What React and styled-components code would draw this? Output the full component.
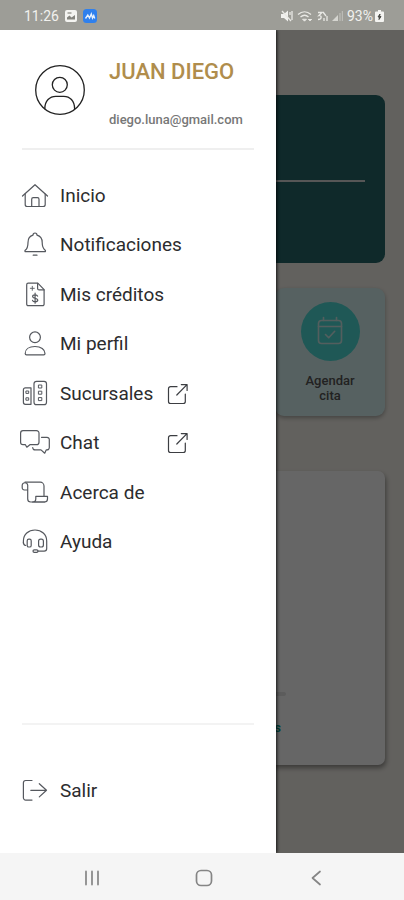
import React from "react";
import styled, { createGlobalStyle } from "styled-components";

const GlobalStyle = createGlobalStyle`
  * {
    box-sizing: border-box;
  }
  body {
    margin: 0;
    font-family: Roboto, "Liberation Sans", sans-serif;
    background: #f5f2eb;
  }
`;

const Screen = styled.div`
  min-height: 100vh;
  display: flex;
  flex-direction: column;
`;

/* status bar */
const StatusBar = styled.header`
  height: 30px;
  padding: 2px 20px 0 24px;
  display: flex;
  align-items: center;
  justify-content: space-between;
  background: #9d9d97;
  color: #f1f1ee;
  font-size: 14px;
`;
const StatusGroup = styled.div`
  display: flex;
  align-items: center;
  gap: ${(props) => props.$gap}px;
`;
const Battery = styled.div`
  display: flex;
  align-items: center;
  gap: 2px;
`;

/* page behind the drawer */
const Main = styled.main`
  flex: 1;
  position: relative;
  display: flex;
  flex-direction: column;
  overflow: hidden;
`;
const Page = styled.div`
  flex: 1;
  padding: 65px 19px 88px;
  display: flex;
  flex-direction: column;
  background: #f5f2eb;
`;
const Hero = styled.section`
  height: 168px;
  padding: 0 20px;
  display: flex;
  align-items: center;
  border-radius: 9px;
  background: #266769;
`;
const HeroLine = styled.hr`
  flex: 1;
  margin: 4px 0 0;
  border: 0;
  border-top: 2px solid #d8d8d8;
`;
const Tile = styled.button`
  align-self: flex-end;
  width: 110px;
  height: 128px;
  margin-top: 25px;
  padding: 0 24px;
  display: flex;
  flex-direction: column;
  align-items: center;
  justify-content: center;
  gap: 12px;
  border: 0;
  border-radius: 9px;
  background: #d8f3f3;
  box-shadow: 0 2px 4px rgba(0, 0, 0, 0.3);
  color: #555;
  font-family: inherit;
  font-size: 13px;
  font-weight: 500;
  line-height: 15px;
`;
const TileCircle = styled.span`
  width: 59px;
  height: 59px;
  display: flex;
  align-items: center;
  justify-content: center;
  flex-shrink: 0;
  border-radius: 50%;
  background: #4fdcd6;
`;
const Panel = styled.section`
  flex: 1;
  min-height: 294px;
  margin-top: 55px;
  padding: 0 104px 29px 0;
  display: flex;
  flex-direction: column;
  justify-content: flex-end;
  align-items: flex-end;
  gap: 24px;
  border-radius: 7px;
  background: #fff;
  box-shadow: 1px 3px 5px rgba(0, 0, 0, 0.4);
`;
const PanelBar = styled.span`
  width: 80px;
  height: 4px;
  margin-right: -5px;
  border-radius: 2px;
  background: #e6e6e6;
`;
const PanelLink = styled.a`
  color: #00a08c;
  font-size: 13px;
  font-weight: 700;
  line-height: 16px;
  text-decoration: none;
`;
const Backdrop = styled.div`
  position: absolute;
  inset: 0;
  background: rgba(0, 0, 0, 0.6);
`;

/* drawer */
const Drawer = styled.aside`
  position: absolute;
  top: 0;
  bottom: 0;
  left: 0;
  width: 276px;
  max-width: 80%;
  padding: 0 22px;
  display: flex;
  flex-direction: column;
  background: #fff;
  box-shadow: 1px 0 3px rgba(0, 0, 0, 0.8);
`;
const Profile = styled.div`
  height: 120px;
  padding: 2px 0 0 12px;
  display: flex;
  align-items: center;
  gap: 23px;
  border-bottom: 2px solid #efefef;
`;
const ProfileText = styled.div`
  padding-top: 8px;
  display: flex;
  flex-direction: column;
  gap: 28px;
`;
const Name = styled.h1`
  margin: 0;
  color: #b08d4c;
  font-size: 22px;
  font-weight: 500;
  line-height: 24px;
`;
const Email = styled.span`
  color: #777;
  font-size: 13px;
  font-weight: 500;
  line-height: 16px;
`;
const Menu = styled.nav`
  height: 396px;
  margin-top: 21px;
  display: grid;
  grid-auto-rows: 1fr;
`;
const MenuItem = styled.a`
  margin-left: -2px;
  display: flex;
  align-items: center;
  gap: 10px;
  color: #2c2c2e;
  font-size: 19px;
  line-height: 24px;
  text-decoration: none;
`;
const MenuLabel = styled.span`
  min-width: ${(props) => (props.$wide ? "97px" : "0")};
`;
const Footer = styled.div`
  margin-top: auto;
  height: 130px;
  padding-top: 3px;
  display: grid;
  border-top: 2px solid #f3f3f3;
`;

/* android navigation */
const SystemNav = styled.footer`
  height: 47px;
  padding: 0 32px 0 36px;
  display: grid;
  grid-template-columns: repeat(3, 1fr);
  background: #f5f5f5;
`;
const SystemButton = styled.button`
  padding: 2px 0 0;
  display: flex;
  align-items: center;
  justify-content: center;
  border: 0;
  background: none;
`;

const Svg = styled.svg`
  flex-shrink: 0;
  fill: none;
  stroke: ${(props) => props.$color || "#55585e"};
  stroke-width: ${(props) => props.$weight || 1.2};
  stroke-linecap: round;
  stroke-linejoin: round;
`;

const icons = {
  home: (
    <>
      <path d="M2.5 15 15 3.7 27.5 15" />
      <path d="M5.2 13v10.5a2 2 0 0 0 2 2h16a2 2 0 0 0 2-2V13" />
      <path d="M11.7 25.5v-7.3a1.5 1.5 0 0 1 1.5-1.5h4.3a1.5 1.5 0 0 1 1.5 1.5v7.3" />
    </>
  ),
  bell: (
    <>
      <path d="M13 5.2c0-1.3.8-2.2 2-2.2s2 .9 2 2.2c3.3.9 5.2 3.6 5.2 7.3 0 4.5 1 6.3 3 7.8.6.5.3 1.4-.5 1.4H5.7c-.8 0-1.1-.9-.5-1.4 2-1.5 2.8-3.3 2.8-7.8 0-3.7 1.7-6.4 5-7.3z" />
      <path d="M13.2 25.2h3.8" />
    </>
  ),
  credit: (
    <>
      <path d="M8.2 3.2h9.6l6.3 6.5v14.5a1.5 1.5 0 0 1-1.5 1.5H8.2a1.5 1.5 0 0 1-1.5-1.5V4.7a1.5 1.5 0 0 1 1.5-1.5z" />
      <path d="M17.6 3.4v5a1.5 1.5 0 0 0 1.5 1.5H24" />
      <path d="M10.3 8.3h4M12.3 6.3v4" strokeWidth="0.9" />
      <path d="M17.6 16.2c-.3-1-1.3-1.4-2.5-1.4-1.5 0-2.5.7-2.5 1.7 0 2.4 5.2 1.2 5.2 3.6 0 1-1.1 1.7-2.6 1.7-1.4 0-2.4-.5-2.7-1.5M15.1 13.2v10" />
    </>
  ),
  user: (
    <>
      <circle cx="15" cy="8.3" r="5.4" />
      <path d="M5.2 24.5c0-4.2 3.8-7 9.8-7s10 2.8 10 7c0 .9-.5 1.3-1.3 1.3H6.500c-.8 0-1.3-.4-1.3-1.3z" />
    </>
  ),
  branches: (
    <>
      <path d="M11 8.8H5.4a2 2 0 0 0-2 2v12.5a2 2 0 0 0 2 2H11z" />
      <rect x="14" y="2.3" width="12.5" height="23.4" rx="2.5" />
      <g strokeWidth="1">
        <rect x="6.3" y="12" width="2.4" height="2.4" />
        <rect x="6.3" y="18.8" width="2.4" height="2.4" />
        <rect x="18.8" y="6" width="3" height="3" />
        <rect x="18.8" y="12.2" width="3" height="3" />
        <rect x="18.8" y="18.6" width="3" height="3" />
      </g>
    </>
  ),
  chat: (
    <>
      <path d="M3 2.7h13.5a2.5 2.5 0 0 1 2.5 2.5v9a2.5 2.5 0 0 1-2.5 2.5h-6.600l-3.1 2.5-1.4-2.5H3A2.5 2.5 0 0 1 .6 14.2v-9A2.5 2.5 0 0 1 3 2.7z" />
      <path d="M21.5 9.3H27a2.3 2.3 0 0 1 2.3 2.3v8a2.3 2.3 0 0 1-2.3 2.3h-.8L24.7 25.2 21 21.9h-6a2.3 2.3 0 0 1-2.3-2.3" />
    </>
  ),
  scroll: (
    <>
      <path d="M7.7 12H4.5A2.2 2.2 0 0 1 2.2 9.8V7a2.8 2.8 0 0 1 5.5 0v14a3 3 0 0 0 3 3h14" />
      <path d="M5 4.2h15.2A3.8 3.8 0 0 1 24 8v9.7" />
      <path d="M15.8 18.3h11.7v2.7a3 3 0 0 1-3 3H12.5a3.3 3.3 0 0 0 3.3-3.3z" />
    </>
  ),
  help: (
    <>
      <path d="M3.4 16v-2C3.4 7.5 8.5 3 15 3s11.7 4.5 11.7 11v7.5a2.6 2.6 0 0 1-2.6 2.6H18" />
      <path d="M3.4 15.5c0 1.7.9 2.7 2.3 3" />
      <rect x="7.2" y="12.2" width="4" height="7.8" rx="1.6" />
      <rect x="18.6" y="12.2" width="4.8" height="7.8" rx="2" />
      <rect x="13" y="22.8" width="5" height="2.6" rx="1.3" />
    </>
  ),
  logout: (
    <>
      <path d="M12 4.5H5.7a2.3 2.3 0 0 0-2.3 2.3v15a2.3 2.3 0 0 0 2.3 2.3H12" />
      <path d="M10.8 14.3h15.7M19.3 7.7l7.2 6.6-7.2 6.6" />
    </>
  ),
};

const MenuIcon = ({ name }) => (
  <Svg width="30" height="30" viewBox="0 0 30 30" aria-hidden="true">
    {icons[name]}
  </Svg>
);

const ExternalIcon = () => (
  <Svg width="22" height="22" viewBox="0 0 22 22" $color="#3c3e42" aria-hidden="true">
    <path d="M10 3.7H3.5a2 2 0 0 0-2 2v12.8a2 2 0 0 0 2 2h12.8a2 2 0 0 0 2-2V11" />
    <path d="M9.8 12 20 1.7M14.3 1.6h5.8v5.8" />
  </Svg>
);

const menu = [
  { icon: "home", label: "Inicio" },
  { icon: "bell", label: "Notificaciones" },
  { icon: "credit", label: "Mis créditos" },
  { icon: "user", label: "Mi perfil" },
  { icon: "branches", label: "Sucursales", external: true },
  { icon: "chat", label: "Chat", external: true },
  { icon: "scroll", label: "Acerca de" },
  { icon: "help", label: "Ayuda" },
];

const StatusIcons = () => (
  <svg width="62" height="14" viewBox="0 0 62 14" fill="none" stroke="#e9e9e5" strokeWidth="1.3">
    <path d="M0 5h3l4-3.5v11L3 9H0z" fill="#f1f1ee" stroke="none" />
    <path d="M1 2l9 10M9 3v3M11 2v9" />
    <path d="M17 5.5c4-3.6 9-3.6 13 0M19.5 8c2.6-2.2 5.6-2.2 8 0" />
    <path d="M21.5 10.2h4l-2 2zM27 10l2 2 2-2" fill="#e9e9e5" strokeWidth="0.8" />
    <path d="M37 3.5h4l-3 3c3-.5 3 4-1 4M42 3l3 4M46 7v5M43 9v3" />
    <path d="M51 12l6-6v6z" fill="#d5d5d0" stroke="none" />
    <path d="M59 12V4M61.3 12V2" stroke="#c4c4bf" strokeWidth="1" />
  </svg>
);

export default function App() {
  return (
    <Screen>
      <GlobalStyle />
      <StatusBar>
        <StatusGroup $gap={6}>
          <span>11:26</span>
          <svg width="12" height="12" viewBox="0 0 12 12">
            <rect width="12" height="12" rx="2" fill="#f4f4f1" />
            <path d="M2 9.5V7.5l2.5-2 2 2L10 5v4.5z" fill="#85857f" />
            <path d="M2.5 3h4" stroke="#85857f" strokeWidth="1.2" />
          </svg>
          <svg width="14" height="14" viewBox="0 0 14 14">
            <rect width="14" height="14" rx="3.5" fill="#2f80ed" />
            <path
              d="M2.5 9.5l2.3-3.5 1.7 3 1.8-4 1.2 4 1.2-2.5 1 3"
              fill="none"
              stroke="#e8f2ff"
              strokeWidth="1.4"
            />
          </svg>
        </StatusGroup>
        <StatusGroup $gap={4}>
          <StatusIcons />
          <Battery>
            <span>93%</span>
            <svg width="9" height="12" viewBox="0 0 9 12">
              <path d="M3 0h3v1.5h2a1 1 0 0 1 1 1V11a1 1 0 0 1-1 1H1a1 1 0 0 1-1-1V2.5a1 1 0 0 1 1-1h2z" fill="#f4f4f1" />
              <path d="M5 4L3 7h1.5L4 9.5 6 6.500H4.500z" fill="#4a4a46" stroke="#4a4a46" />
            </svg>
          </Battery>
        </StatusGroup>
      </StatusBar>

      <Main>
        <Page>
          <Hero>
            <HeroLine />
          </Hero>
          <Tile>
            <TileCircle>
              <Svg width="30" height="30" viewBox="0 0 30 30" $color="#d0eceb" $weight={1.6}>
                <rect x="3.5" y="4.5" width="23" height="23" rx="3" />
                <path d="M3.5 10.5h23M8.5 1.5v3M21.5 1.5v3" />
                <path d="M10.5 18.5l3.2 3.2 6-6.4" />
              </Svg>
            </TileCircle>
            Agendar cita
          </Tile>
          <Panel>
            <PanelBar />
            <PanelLink href="#">s</PanelLink>
          </Panel>
        </Page>
        <Backdrop />
        <Drawer>
          <Profile>
            <Svg width="52" height="52" viewBox="0 0 52 52" $color="#222" $weight={1.3} aria-hidden="true">
              <circle cx="26" cy="26" r="24.3" />
              <circle cx="25.8" cy="20.8" r="7.5" />
              <path d="M10.8 44.8c0-8 5-12.5 11-12.5h8c6 0 10.8 4.5 10.8 12.5" />
            </Svg>
            <ProfileText>
              <Name>JUAN DIEGO</Name>
              <Email>diego.luna@gmail.com</Email>
            </ProfileText>
          </Profile>
          <Menu>
            {menu.map((item) => (
              <MenuItem href="#" key={item.label}>
                <MenuIcon name={item.icon} />
                <MenuLabel $wide={item.external}>{item.label}</MenuLabel>
                {item.external && <ExternalIcon />}
              </MenuItem>
            ))}
          </Menu>
          <Footer>
            <MenuItem href="#">
              <MenuIcon name="logout" />
              <MenuLabel>Salir</MenuLabel>
            </MenuItem>
          </Footer>
        </Drawer>
      </Main>

      <SystemNav>
        <SystemButton aria-label="Recientes">
          <Svg width="18" height="18" viewBox="0 0 18 18" $color="#8c8c8c" $weight={1.8}>
            <path d="M3 2.5v13M9 2.5v13M15 2.5v13" />
          </Svg>
        </SystemButton>
        <SystemButton aria-label="Pantalla de inicio">
          <Svg width="18" height="18" viewBox="0 0 18 18" $color="#858585" $weight={1.7}>
            <rect x="1.5" y="1.5" width="15" height="15" rx="4.5" />
          </Svg>
        </SystemButton>
        <SystemButton aria-label="Atrás">
          <Svg width="18" height="18" viewBox="0 0 18 18" $color="#858585" $weight={1.7}>
            <path d="M13 2.5L5.5 9l7.5 6.5" />
          </Svg>
        </SystemButton>
      </SystemNav>
    </Screen>
  );
}
